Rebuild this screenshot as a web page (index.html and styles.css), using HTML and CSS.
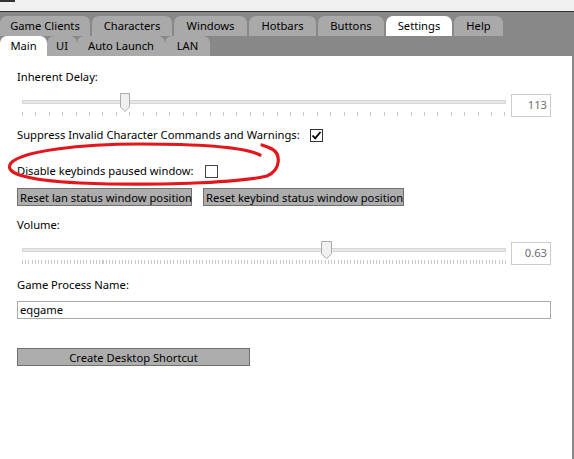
FILE: index.html
```html
<!DOCTYPE html>
<html>
<head>
<meta charset="utf-8">
<link rel="stylesheet" href="styles.css">
</head>
<body>
<div class="titlebar"><span class="mark"></span></div>
<div class="tabs row1">
  <div class="tab w-gc">Game Clients</div>
  <div class="tab w-ch">Characters</div>
  <div class="tab w-win">Windows</div>
  <div class="tab w-hot">Hotbars</div>
  <div class="tab w-btn">Buttons</div>
  <div class="tab w-set active">Settings</div>
  <div class="tab w-help">Help</div>
</div>
<div class="tabs row2">
  <div class="tab w-main active">Main</div>
  <div class="tab w-ui">UI</div>
  <div class="tab w-al">Auto Launch</div>
  <div class="tab w-lan">LAN</div>
</div>
<div class="panel">
  <div class="label first">Inherent Delay:</div>
  <div class="slider-row">
    <div class="slider">
      <div class="track"></div>
      <div class="ticks ticks-wide"></div>
      <svg class="thumb" style="left:103px" width="10" height="19" viewBox="0 0 10 19"><path d="M0.5 0.5 H9.5 V14 L5 18.5 L0.5 14 Z" fill="#f0f0f0" stroke="#acacac"/></svg>
    </div>
    <div class="valbox">113</div>
  </div>
  <div class="check-row suppress">
    <span>Suppress Invalid Character Commands and Warnings:</span>
    <span class="box checked"><svg width="11" height="11" viewBox="0 0 11 11"><path d="M1.5 5.5 L4.2 8.3 L9.5 2" fill="none" stroke="#000" stroke-width="1.8"/></svg></span>
  </div>
  <div class="check-row disable">
    <span>Disable keybinds paused window:</span>
    <span class="box"></span>
  </div>
  <div class="btn-row">
    <button class="btn b1">Reset lan status window position</button>
    <button class="btn b2">Reset keybind status window position</button>
  </div>
  <div class="label vol">Volume:</div>
  <div class="slider-row">
    <div class="slider">
      <div class="track"></div>
      <div class="ticks ticks-dense"></div>
      <svg class="thumb" style="left:304px" width="11" height="19" viewBox="0 0 11 19"><path d="M0.5 0.5 H10.5 V13 L5.5 17.5 L0.5 13 Z" fill="#f0f0f0" stroke="#acacac"/></svg>
    </div>
    <div class="valbox">0.63</div>
  </div>
  <div class="label gpn">Game Process Name:</div>
  <div class="input">eqgame</div>
  <button class="btn shortcut">Create Desktop Shortcut</button>
</div>
<svg class="scribble" width="290" height="50" viewBox="0 0 290 50"><path d="M260 15 C245 7, 200 4, 140 4 C80 4, 22 11, 11 23 C4 32, 20 40, 80 43 C150 46, 240 43, 267 36 C281 30, 281 14, 272 9 C268 7, 265 6, 262 5" fill="none" stroke="#e3171b" stroke-width="3.2" stroke-linecap="round" stroke-linejoin="round"/></svg>
</body>
</html>
```
FILE: styles.css
```css
html, body {
  margin: 0;
  padding: 0;
}
body {
  width: 574px;
  height: 459px;
  overflow: hidden;
  background: #888888;
  font-family: "Noto Sans", "Liberation Sans", sans-serif;
  font-size: 11.2px;
  color: #000;
  position: relative;
}
.titlebar {
  height: 11px;
  background: #f0f0f0;
  border-bottom: 1px solid #2e2e2e;
  position: relative;
}
.mark {
  position: absolute;
  left: 0;
  top: 0;
  width: 15px;
  height: 2px;
  background: #333;
}
.tabs {
  display: flex;
  height: 20px;
}
.row1 {
  margin-top: 4px;
  gap: 2px;
}
.row2 {
  gap: 0;
}
.tab {
  box-sizing: border-box;
  height: 20px;
  background: #a9a9a9;
  border-radius: 7px 7px 0 0;
  text-align: center;
  line-height: 20px;
  white-space: nowrap;
  color: #000;
}
.tab.active {
  background: #fff;
}
.w-gc { width: 90px; }
.w-ch { width: 80px; }
.w-win { width: 73px; }
.w-hot { width: 67px; }
.w-btn { width: 66px; }
.w-set { width: 66px; }
.w-help { width: 49px; }
.w-main { width: 47px; }
.w-ui { width: 30px; }
.w-al { width: 88px; }
.w-lan { width: 45px; }

.panel {
  background: #fff;
  width: 572px;
  height: 403px;
  padding-left: 17px;
  box-sizing: border-box;
  overflow: hidden;
}
.label {
  height: 16px;
  line-height: 16px;
}
.label.first { padding-top: 13px; }
.label.vol { margin-top: 11px; }
.label.gpn { margin-top: 12px; }

.slider-row {
  display: flex;
  width: 534px;
  height: 23px;
  margin-top: 9px;
}
.slider {
  position: relative;
  flex: 1;
  height: 23px;
}
.track {
  position: absolute;
  left: 5px;
  right: 0;
  top: 6px;
  height: 4px;
  box-sizing: border-box;
  background: #e7e7e7;
  border: 1px solid #d6d6d6;
}
.ticks {
  position: absolute;
  left: 5px;
  right: 0;
  top: 18px;
  height: 4px;
}
.ticks-wide {
  background: repeating-linear-gradient(to right, #c9c9c9 0, #c9c9c9 1px, transparent 1px, transparent 13.4px);
}
.ticks-dense {
  background: repeating-linear-gradient(to right, #c9c9c9 0, #c9c9c9 1px, transparent 1px, transparent 3.22px);
}
.thumb {
  position: absolute;
  top: -1px;
}
.valbox {
  box-sizing: border-box;
  width: 40px;
  height: 23px;
  margin-left: 5px;
  border: 1px solid #cccccc;
  text-align: right;
  padding-right: 3px;
  line-height: 19px;
  color: #6d6d6d;
}
.check-row {
  display: flex;
  align-items: center;
  height: 16px;
  line-height: 16px;
}
.check-row.suppress { margin-top: 10px; }
.check-row.disable { margin-top: 20px; }
.box {
  box-sizing: border-box;
  width: 13px;
  height: 13px;
  border: 1px solid #333;
  background: #fff;
  display: inline-flex;
  align-items: center;
  justify-content: center;
}
.suppress .box { margin-left: 10px; }
.disable .box { margin-left: 11px; border-color: #444; }

.btn-row {
  display: flex;
  gap: 11px;
  margin-top: 9px;
}
.btn {
  box-sizing: border-box;
  height: 18px;
  background: #adadad;
  border: 1px solid #707070;
  font-family: inherit;
  font-size: 11.2px;
  color: #000;
  padding: 0 2px;
  line-height: 15px;
  margin: 0;
  white-space: nowrap;
}
.b1 { width: 175px; }
.b2 { width: 201px; }

.input {
  box-sizing: border-box;
  width: 534px;
  height: 18px;
  margin-top: 8px;
  border: 1px solid #aaaaaa;
  padding-left: 2px;
  line-height: 15px;
}
.shortcut {
  display: block;
  width: 233px;
  margin-top: 29px;
}
.scribble {
  position: absolute;
  left: 0;
  top: 140px;
}
```
